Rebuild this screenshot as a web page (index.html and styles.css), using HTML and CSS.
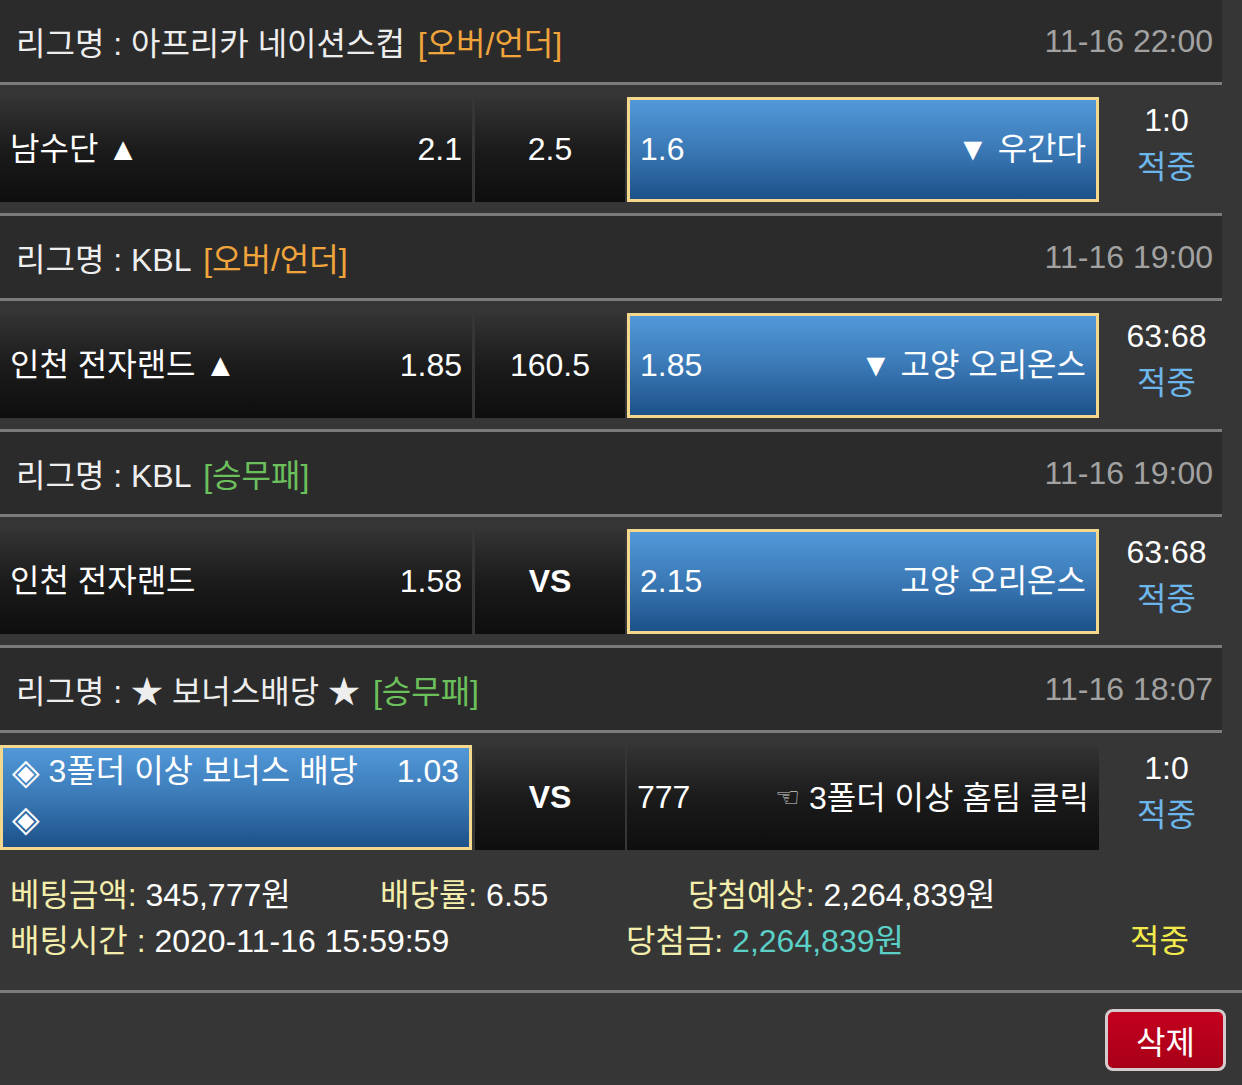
FILE: index.html
```html
<!DOCTYPE html>
<html lang="ko">
<head>
<meta charset="UTF-8">
<meta name="viewport" content="width=device-width, initial-scale=1.0">
<title>배팅내역</title>
<link rel="stylesheet" href="styles.css">
</head>
<body>

<div class="slip">
    <div class="game">
        <div class="league">
            <div class="league-name">리그명 : 아프리카 네이션스컵 <span class="type over">[오버/언더]</span></div>
            <div class="league-time">11-16 22:00</div>
        </div>
        <div class="bet-row">
            <div class="cell home"><span class="name">남수단 ▲</span><span>2.1</span></div>
            <div class="cell mid">2.5</div>
            <div class="cell away picked"><span>1.6</span><span class="name">▼ 우간다</span></div>
            <div class="result"><div>1:0</div><div class="hit">적중</div></div>
        </div>
    </div>

    <div class="game">
        <div class="league">
            <div class="league-name">리그명 : KBL <span class="type over">[오버/언더]</span></div>
            <div class="league-time">11-16 19:00</div>
        </div>
        <div class="bet-row">
            <div class="cell home"><span class="name">인천 전자랜드 ▲</span><span>1.85</span></div>
            <div class="cell mid">160.5</div>
            <div class="cell away picked"><span>1.85</span><span class="name">▼ 고양 오리온스</span></div>
            <div class="result"><div>63:68</div><div class="hit">적중</div></div>
        </div>
    </div>

    <div class="game">
        <div class="league">
            <div class="league-name">리그명 : KBL <span class="type wdl">[승무패]</span></div>
            <div class="league-time">11-16 19:00</div>
        </div>
        <div class="bet-row">
            <div class="cell home"><span class="name">인천 전자랜드</span><span>1.58</span></div>
            <div class="cell mid vs">VS</div>
            <div class="cell away picked"><span>2.15</span><span class="name">고양 오리온스</span></div>
            <div class="result"><div>63:68</div><div class="hit">적중</div></div>
        </div>
    </div>

    <div class="game">
        <div class="league">
            <div class="league-name">리그명 : ★ 보너스배당 ★ <span class="type wdl">[승무패]</span></div>
            <div class="league-time">11-16 18:07</div>
        </div>
        <div class="bet-row">
            <div class="cell home picked bonus"><span class="name"><span class="gem">◈</span> 3폴더 이상 보너스 배당 <span class="gem">◈</span></span><span>1.03</span></div>
            <div class="cell mid vs">VS</div>
            <div class="cell away"><span>777</span><span class="name"><span class="hand">☜</span> 3폴더 이상 홈팀 클릭</span></div>
            <div class="result"><div>1:0</div><div class="hit">적중</div></div>
        </div>
    </div>
</div>

<div class="summary">
    <div class="sum-line">
        <div class="sum-item w1"><span class="label">베팅금액:</span> 345,777원</div>
        <div class="sum-item w2"><span class="label">배당률:</span> 6.55</div>
        <div class="sum-item"><span class="label">당첨예상:</span> 2,264,839원</div>
    </div>
    <div class="sum-line">
        <div class="sum-item w3"><span class="label">배팅시간 :</span> 2020-11-16 15:59:59</div>
        <div class="sum-item w4"><span class="label">당첨금:</span> <span class="won">2,264,839원</span></div>
        <div class="sum-item status">적중</div>
    </div>
</div>

<div class="actions">
    <button type="button" class="btn-delete">삭제</button>
</div>

</body>
</html>
```

FILE: styles.css
```css
body {
    margin: 0;
    padding: 0;
    background-color: #363636;
    color: #fff;
    font-family: "Liberation Sans", "Noto Sans CJK KR", sans-serif;
    font-size: 32px;
}
.slip {
    width: 1222px;
}
.game {
    border-top: 3px solid #7b7b7b;
}
.game:first-child {
    border-top: none;
}
.league {
    height: 82px;
    display: flex;
    align-items: center;
    justify-content: space-between;
    padding: 0 9px 0 16px;
    background-color: #2b2b2b;
    border-bottom: 3px solid #7b7b7b;
    color: #eee;
}
.league-time {
    color: #a2a2a2;
}
.type {
    margin-left: 4px;
}
.type.over {
    color: #f0a43c;
}
.type.wdl {
    color: #6cc05c;
}
.bet-row {
    display: flex;
    padding: 12px 0 11px;
    line-height: 47px;
}
.cell {
    height: 105px;
    box-sizing: border-box;
    display: flex;
    align-items: center;
    justify-content: space-between;
    padding: 0 10px;
    background: linear-gradient(#343434, #1b1b1b 50%, #0e0e0e);
}
.home {
    width: 472px;
}
.mid {
    width: 150px;
    margin: 0 2px 0 3px;
    justify-content: center;
}
.mid.vs {
    font-weight: bold;
}
.away {
    width: 472px;
}
.picked {
    border: 3px solid #f4d98c;
    padding: 0 10px;
    background: linear-gradient(#5298d8, #3a79b6 50%, #1d5189);
}
.bonus {
    align-items: flex-start;
    padding-left: 9px;
}
.bonus .name {
    width: 350px;
}
.gem {
    font-family: "DejaVu Sans", sans-serif;
    font-size: 36px;
    vertical-align: -2px;
}
.hand {
    font-family: "DejaVu Sans", sans-serif;
    font-size: 28px;
    color: #ccc;
    vertical-align: 2px;
}
.result {
    flex: 1;
    padding-left: 12px;
    text-align: center;
}
.hit {
    color: #6db6ec;
}
.summary {
    padding: 11px 0 26px 10px;
    border-bottom: 3px solid #7b7b7b;
    line-height: 46px;
}
.sum-line {
    display: flex;
}
.w1 {
    width: 370px;
}
.w2 {
    width: 308px;
}
.w3 {
    width: 616px;
}
.w4 {
    width: 504px;
}
.label {
    color: #f4eeac;
}
.won {
    color: #5ad0c6;
}
.status {
    color: #f2ea4c;
}
.actions {
    display: flex;
    justify-content: flex-end;
    padding: 16px 16px 0 0;
}
.btn-delete {
    width: 121px;
    height: 62px;
    border: 3px solid #d4cccc;
    border-radius: 8px;
    background: linear-gradient(#c4001e, #a80018);
    color: #fff;
    font-family: "Liberation Sans", "Noto Sans CJK KR", sans-serif;
    font-size: 32px;
    cursor: pointer;
}
```
